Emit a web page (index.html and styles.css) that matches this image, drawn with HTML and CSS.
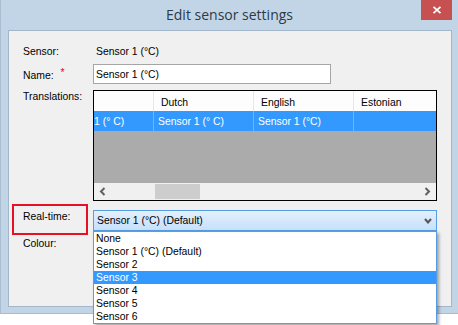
FILE: index.html
```html
<html>
	<head>
		<title>Edit sensor settings</title>
		<link rel="stylesheet" href="styles.css">
	</head>
	<body>
		<div class="window">
			<div class="titlebar">
				<span class="title">Edit sensor settings</span>
				<div class="close-wrap">
					<div class="close">
						<svg width="10" height="8" viewBox="0 0 10 8">
							<path d="M1.5 0.8 L8.5 7.2 M8.5 0.8 L1.5 7.2" stroke="#fff" stroke-width="1.8" fill="none"/>
						</svg>
					</div>
				</div>
			</div>

			<div class="client">
				<div class="row sensor">
					<span class="label">Sensor:</span>
					<span class="value">Sensor 1 (°C)</span>
				</div>

				<div class="row name">
					<span class="label">Name:<span class="required">*</span></span>
					<input class="textbox" type="text" value="Sensor 1 (°C)">
				</div>

				<div class="row translations">
					<span class="label">Translations:</span>
					<div class="grid">
						<div class="grid-head">
							<div class="cell first"></div>
							<div class="cell">Dutch</div>
							<div class="cell">English</div>
							<div class="cell last">Estonian</div>
						</div>
						<div class="grid-row selected">
							<div class="cell first">1 (° C)</div>
							<div class="cell">Sensor 1 (° C)</div>
							<div class="cell">Sensor 1 (°C)</div>
							<div class="cell last"></div>
						</div>
						<div class="grid-empty"></div>
						<div class="hscroll">
							<div class="arrow">
								<svg width="7" height="9" viewBox="0 0 7 9"><polyline points="5.5,1 2,4.5 5.5,8" stroke="#606060" stroke-width="2" fill="none"/></svg>
							</div>
							<div class="track"><div class="thumb"></div></div>
							<div class="arrow">
								<svg width="7" height="9" viewBox="0 0 7 9"><polyline points="1.5,1 5,4.5 1.5,8" stroke="#606060" stroke-width="2" fill="none"/></svg>
							</div>
						</div>
					</div>
				</div>

				<div class="row realtime">
					<span class="label marked">Real-time:</span>
					<div class="combo-wrap">
						<div class="combo">
							<span>Sensor 1 (°C) (Default)</span>
							<svg width="8" height="6" viewBox="0 0 8 6"><polyline points="1,1 4,4.5 7,1" stroke="#555" stroke-width="2" fill="none"/></svg>
						</div>
						<ul class="dropdown">
							<li>None</li>
							<li>Sensor 1 (°C) (Default)</li>
							<li>Sensor 2</li>
							<li class="hover">Sensor 3</li>
							<li>Sensor 4</li>
							<li>Sensor 5</li>
							<li>Sensor 6</li>
						</ul>
					</div>
				</div>

				<div class="row colour">
					<span class="label">Colour:</span>
				</div>
			</div>
		</div>
	</body>
</html>
```

FILE: styles.css
```css
* {
	margin: 0;
	padding: 0;
	box-sizing: border-box;
}

body {
	background: #fff;
	color: #000;
	font-family: "Liberation Sans", Arial, sans-serif;
	font-size: 10.4px;
	width: 458px;
	height: 325px;
	overflow: hidden;
}

.window {
	width: 458px;
	height: 314px;
	background: #c2d5e6;
	border-left: 1px solid #a9bdd0;
	border-bottom: 1px solid #a9bdd0;
}

.titlebar {
	height: 30px;
	display: grid;
	grid-template-columns: 1fr auto 1fr;
	align-items: start;
}

.title {
	grid-column: 2;
	font-family: "Open Sans", sans-serif;
	font-size: 14px;
	line-height: 30px;
	color: #2c3a48;
}

.close-wrap {
	grid-column: 3;
	display: flex;
	justify-content: flex-end;
	padding-right: 6px;
}

.close {
	width: 31px;
	height: 20px;
	background: #c75050;
	display: flex;
	align-items: center;
	justify-content: center;
}

.client {
	margin: 0 6px 0 7px;
	height: 277px;
	background: #f0f0f0;
	border: 1px solid #a3b6ca;
	padding: 14px 14px 0 14px;
}

.row {
	display: grid;
	grid-template-columns: 70px 344px;
	line-height: 14px;
}

.value {
	padding-left: 3px;
}

.name {
	margin-top: 5px;
	align-items: center;
}

.required {
	color: #e00000;
	margin-left: 7px;
	vertical-align: 3px;
}

.textbox {
	width: 238px;
	height: 20px;
	border: 1px solid #a5a5a5;
	background: #fff;
	padding: 0 2px;
	font: inherit;
	color: #000;
	outline: none;
}

.translations {
	margin-top: 6px;
	align-items: start;
}

.grid {
	height: 111px;
	border: 1px solid #000;
	background: #ababab;
	display: flex;
	flex-direction: column;
	overflow: hidden;
}

.grid-head,
.grid-row {
	height: 20px;
	display: flex;
	flex-shrink: 0;
}

.grid-head {
	background: #fdfdfd;
}

.cell {
	width: 100px;
	flex-shrink: 0;
	border-right: 1px solid #e3e9f1;
	white-space: nowrap;
	overflow: hidden;
}

.cell.first {
	width: 60px;
}

.cell.last {
	flex: 1;
	border-right: none;
}

.grid-head .cell {
	padding: 5px 0 0 7px;
}

.grid-head .cell.first {
	padding: 0;
}

.grid-row .cell {
	padding: 4px 0 0 4px;
}

.grid-row .cell.first {
	padding-left: 0;
}

.selected {
	background: #3399ff;
	color: #fff;
}

.selected .cell {
	border-right-color: #6fb5fb;
}

.grid-empty {
	flex: 1;
}

.hscroll {
	height: 17px;
	background: #f0f0f0;
	display: flex;
	flex-shrink: 0;
}

.arrow {
	width: 17px;
	display: flex;
	align-items: center;
	justify-content: center;
}

.track {
	flex: 1;
	padding: 1px 0 1px 44px;
}

.thumb {
	width: 45px;
	height: 15px;
	background: #cdcdcd;
}

.realtime {
	margin-top: 9px;
	align-items: start;
}

.marked {
	position: relative;
}

.marked::after {
	content: "";
	position: absolute;
	left: -11px;
	top: -6px;
	width: 72px;
	height: 27px;
	border: 2px solid #e81123;
}

.combo-wrap {
	position: relative;
}

.combo {
	height: 21px;
	border: 1px solid #569de5;
	background: linear-gradient(#e4f0fc, #c6e0fb);
	display: flex;
	align-items: center;
	justify-content: space-between;
	padding: 0 4px 0 3px;
}

.dropdown {
	position: absolute;
	left: 0;
	top: 21px;
	width: 344px;
	list-style: none;
	background: #fff;
	border: 1px solid #569de5;
	box-shadow: 2px 2px 3px rgba(0, 0, 0, 0.35);
	z-index: 2;
}

.dropdown li {
	height: 13px;
	line-height: 13px;
	padding-left: 2px;
}

.dropdown li.hover {
	background: #3399ff;
	color: #fff;
}

.colour {
	margin-top: 6px;
}
```
